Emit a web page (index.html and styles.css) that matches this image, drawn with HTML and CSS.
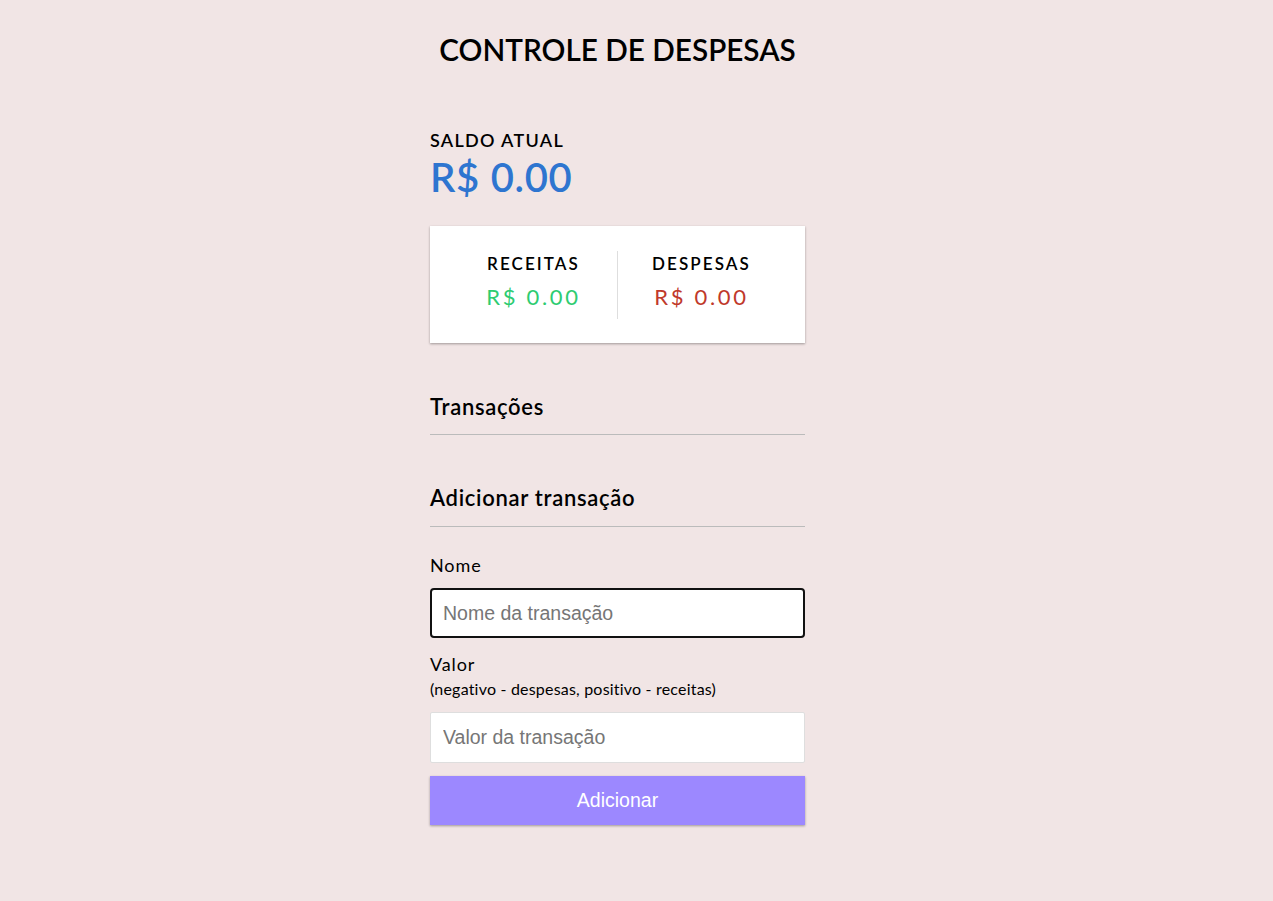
FILE: index.html
```html
<!DOCTYPE html>
<html lang="pt-BR">
<head>
<meta charset="UTF-8">
<title>Controle de Despesas</title>
<link rel="stylesheet" href="styles.css">
</head>
<body>
  <div class="container">
    <h2 class="title">CONTROLE DE DESPESAS</h2>

    <h4 class="saldo-label">Saldo atual</h4>
    <h1 class="balance">R$ 0.00</h1>

    <div class="inc-exp">
      <div class="inc-exp-col inc-exp-col--first">
        <h4 class="col-label">Receitas</h4>
        <p class="money money--plus">R$ 0.00</p>
      </div>
      <div class="inc-exp-col">
        <h4 class="col-label">Despesas</h4>
        <p class="money money--minus">R$ 0.00</p>
      </div>
    </div>

    <h3 class="section-title section-title--list">Transações</h3>
    <ul class="list"></ul>

    <h3 class="section-title section-title--form">Adicionar transação</h3>
    <form class="form">
      <label class="form-label form-label--name" for="text">Nome</label>
      <input class="input input--focus" type="text" id="text" placeholder="Nome da transação">

      <label class="form-label form-label--amount" for="amount">Valor <span class="hint">(negativo - despesas, positivo - receitas)</span></label>
      <input class="input input--amount" type="number" id="amount" placeholder="Valor da transação">

      <button class="btn" type="button">Adicionar</button>
    </form>
  </div>
</body>
</html>
```

FILE: styles.css
```css
* { box-sizing: border-box; }

body {
  margin: 0;
  background: #f1e5e5;
  font-family: "Lato", "Noto Sans", sans-serif;
  font-size: 18px;
  line-height: 1.2;
  color: #000;
  display: flex;
  justify-content: center;
  padding: 31px 38px 40px 0;
}

.container {
  width: 375px;
}

.title {
  margin: 0;
  text-align: center;
  font-size: 29.7px;
  font-weight: 600;
  line-height: 37px;
}

.saldo-label {
  margin: 62px 0 0;
  font-size: 18px;
  font-weight: 600;
  letter-spacing: 1.3px;
  text-transform: uppercase;
  line-height: 1.2;
}

.balance {
  margin: 1px 0 0;
  font-size: 40px;
  font-weight: 600;
  letter-spacing: 0.7px;
  color: #2e75d0;
  line-height: 1.2;
}

.inc-exp {
  background: #fff;
  box-shadow: 0 1px 3px rgba(0,0,0,0.12), 0 1px 2px rgba(0,0,0,0.24);
  padding: 25px 20px 24px;
  display: flex;
  margin-top: 25px;
}

.inc-exp-col {
  flex: 1;
  text-align: center;
  padding-bottom: 9px;
}

.inc-exp-col--first {
  border-right: 1px solid #dedede;
}

.col-label {
  margin: 0;
  font-size: 17px;
  font-weight: 600;
  letter-spacing: 2.1px;
  text-transform: uppercase;
  line-height: 25px;
}

.money {
  margin: 8px 0 0;
  font-size: 22px;
  letter-spacing: 2.7px;
  line-height: 1.2;
}

.money--plus { color: #2ecc71; }
.money--minus { color: #c0392b; }

.section-title {
  margin: 0;
  font-size: 22px;
  font-weight: 600;
  letter-spacing: 0.7px;
  line-height: 1.2;
  border-bottom: 1px solid #bbb;
  padding-bottom: 14px;
}

.section-title--list { margin-top: 51px; }
.section-title--form { margin-top: 50px; }

.list {
  list-style: none;
  padding: 0;
  margin: 0;
}

.form {
  display: flex;
  flex-direction: column;
}

.form-label {
  display: block;
  letter-spacing: 0.9px;
}

.form-label--name { margin: 28px 0 12px; }
.form-label--amount { margin: 16px 0 14px; }

.hint {
  display: block;
  margin-top: 3px;
  font-size: 16px;
  letter-spacing: 0.2px;
}

.input {
  display: block;
  width: 100%;
  height: 50px;
  border: 1px solid #dedede;
  border-radius: 2px;
  font-family: "Liberation Sans", Arial, sans-serif;
  font-size: 19.5px;
  padding: 0 12px;
  background: #fff;
  color: #000;
  outline: none;
}

.input::placeholder { color: #767676; }

.input--focus {
  border: 2px solid #111;
  border-radius: 4px;
  padding: 0 11px;
}

.input--amount { height: 51px; }

.btn {
  display: block;
  width: 100%;
  height: 49px;
  margin-top: 13px;
  background: #9c88ff;
  color: #fff;
  border: 0;
  font-family: "Liberation Sans", Arial, sans-serif;
  font-size: 19.5px;
  box-shadow: 0 1px 3px rgba(0,0,0,0.12), 0 1px 2px rgba(0,0,0,0.24);
}
```
